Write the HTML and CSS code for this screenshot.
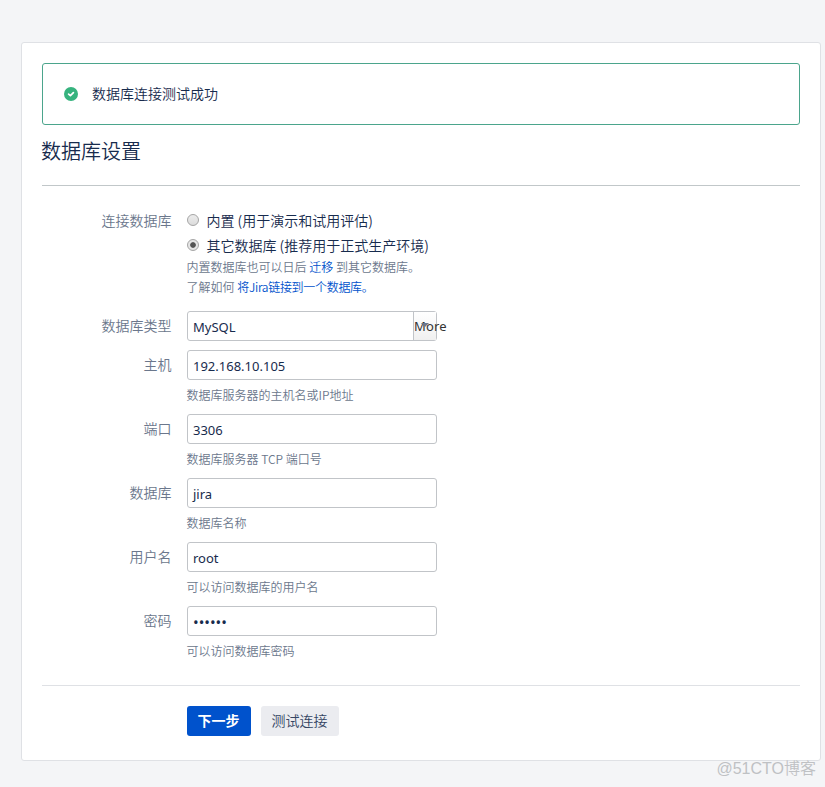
FILE: index.html
```html
<!DOCTYPE html>
<html lang="zh-CN">
<head>
<meta charset="utf-8">
<title>数据库设置</title>
<link rel="stylesheet" href="styles.css">
</head>
<body>
<main class="card">
  <div class="alert">
    <svg class="alert-icon" width="14" height="14" viewBox="0 0 14 14"><circle cx="7" cy="7" r="7" fill="#36b37e"/><path d="M4.6 7.1l1.8 1.5 3-3" fill="none" stroke="#fff" stroke-width="1.7" stroke-linecap="round" stroke-linejoin="round"/></svg>
    <span>数据库连接测试成功</span>
  </div>
  <header class="heading"><h1>数据库设置</h1></header>
  <form class="form">
    <div class="row row-radio">
      <span class="label">连接数据库</span>
      <div class="field">
        <label class="option"><span class="radio"></span><span>内置 (用于演示和试用评估)</span></label>
        <label class="option"><span class="radio checked"></span><span>其它数据库 (推荐用于正式生产环境)</span></label>
        <p class="help">内置数据库也可以日后 <a>迁移</a> 到其它数据库。<br>了解如何 <a class="tight">将Jira链接到一个数据库。</a></p>
      </div>
    </div>
    <div class="row">
      <span class="label">数据库类型</span>
      <div class="field"><div class="input select"><span>MySQL</span><span class="more"><i class="arrow"></i>More</span></div></div>
    </div>
    <div class="row">
      <span class="label">主机</span>
      <div class="field"><div class="input">192.168.10.105</div><p class="help">数据库服务器的主机名或IP地址</p></div>
    </div>
    <div class="row">
      <span class="label">端口</span>
      <div class="field"><div class="input">3306</div><p class="help">数据库服务器 TCP 端口号</p></div>
    </div>
    <div class="row">
      <span class="label">数据库</span>
      <div class="field"><div class="input">jira</div><p class="help">数据库名称</p></div>
    </div>
    <div class="row">
      <span class="label">用户名</span>
      <div class="field"><div class="input">root</div><p class="help">可以访问数据库的用户名</p></div>
    </div>
    <div class="row">
      <span class="label">密码</span>
      <div class="field"><div class="input password">••••••</div><p class="help">可以访问数据库密码</p></div>
    </div>
  </form>
  <footer class="actions">
    <button class="button primary" type="button">下一步</button>
    <button class="button" type="button">测试连接</button>
  </footer>
</main>
<div class="watermark">@51CTO博客</div>
</body>
</html>
```
FILE: styles.css
```css
* { box-sizing: border-box; }
body {
  margin: 0;
  height: 787px;
  padding: 42px 4px 0 21px;
  overflow: hidden;
  background: #f4f5f7;
  color: #172b4d;
  font: 350 14px/20px "Noto Sans CJK SC DemiLight", "Noto Sans CJK SC", sans-serif;
}
.card {
  height: 719px;
  padding: 20px;
  background: #fff;
  border: 1px solid #dfe1e5;
  border-radius: 3px;
}
.alert {
  display: flex;
  align-items: center;
  gap: 14.5px;
  height: 62px;
  padding: 0 0 2px 20.5px;
  border: 1px solid #4ba58c;
  border-radius: 3px;
}
.alert-icon { position: relative; top: 1px; }
.heading {
  height: 61px;
  padding-top: 11px;
  border-bottom: 1px solid #c1c7c9;
}
h1 { margin: 0 0 0 -1px; font-size: 20px; line-height: 30px; font-weight: 350; }
.form { display: flex; flex-direction: column; gap: 9px; padding-top: 21px; }
.row { display: flex; gap: 15px; }
.row-radio { margin-bottom: 5px; }
.label {
  width: 130px;
  padding: 4px 0.5px 0 0;
  text-align: right;
  color: #6b778c;
}
.option { display: flex; align-items: center; gap: 7.5px; height: 25px; }
.radio {
  width: 12px;
  height: 12px;
  border: 1px solid #a5a5a5;
  border-radius: 50%;
  background: linear-gradient(#ececec, #dcdcdc);
}
.checked { background: radial-gradient(circle, #555 2.4px, #e6e6e6 3.2px); }
.row-radio .label { padding-top: 3px; }
.help { margin: 5px 0 0 -0.5px; font-size: 12px; color: #6b778c; }
.row-radio .help { margin-top: 0; }
a { color: #0052cc; }
.tight { letter-spacing: -0.3px; }
.input {
  display: flex;
  align-items: center;
  width: 250px;
  height: 30px;
  padding: 2px 0 0 5px;
  border: 1px solid #c1c4c8;
  border-radius: 3px;
  font: 400 13px/20px "Noto Sans", sans-serif;
}
.select { justify-content: space-between; padding-top: 0; }
.select > span:first-child { padding-top: 2px; }
.more {
  position: relative;
  width: 23px;
  height: 28px;
  line-height: 28px;
  border-left: 1px solid #c1c4c8;
  background: linear-gradient(#fff, #f0f0f0);
  color: #333;
  white-space: nowrap;
  letter-spacing: 0.2px;
}
.arrow {
  position: absolute;
  left: 7px;
  top: 11px;
  border: 4px solid transparent;
  border-top-color: #6b778c;
}
.password { font-size: 15px; }
.actions {
  display: flex;
  gap: 10px;
  margin-top: 24px;
  padding: 20px 0 0 145px;
  border-top: 1px solid #dfe1e5;
}
.button {
  width: 78px;
  height: 30px;
  padding: 0 1px 1px 0;
  border: 0;
  border-radius: 3px;
  background: #ebecf0;
  color: #344563;
  font: 350 14px/29px "Noto Sans CJK SC DemiLight", "Noto Sans CJK SC", sans-serif;
}
.primary { width: 64px; background: #0052cc; color: #fff; font-weight: 700; font-family: "Noto Sans CJK SC", sans-serif; }
.watermark {
  position: absolute;
  right: 9px;
  bottom: 7px;
  color: #bfc1c4;
  font: 350 16px/22px "Liberation Sans", "Noto Sans CJK SC", sans-serif;
}
```
